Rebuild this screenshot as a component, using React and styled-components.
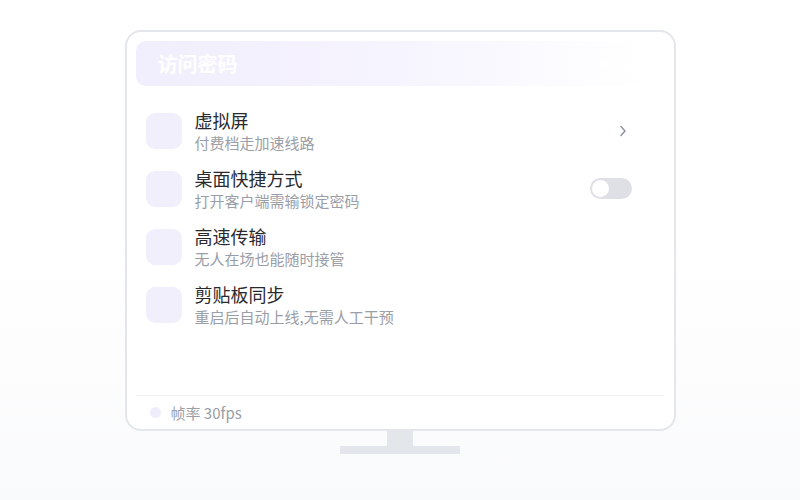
import React from "react";
import styled, { createGlobalStyle } from "styled-components";

const GlobalStyle = createGlobalStyle`
  html, body {
    margin: 0;
    padding: 0;
    background: #ffffff;
    font-family: "Noto Sans CJK SC", "Noto Sans", sans-serif;
  }
`;

const items = [
  { title: "虚拟屏", sub: "付费档走加速线路", action: "chevron" },
  { title: "桌面快捷方式", sub: "打开客户端需输锁定密码", action: "toggle" },
  { title: "高速传输", sub: "无人在场也能随时接管" },
  { title: "剪贴板同步", sub: "重启后自动上线,无需人工干预" },
];

export default function App() {
  return (
    <>
      <GlobalStyle />
      <Page>
        <Monitor>
          <Header>
            <HeaderTitle>访问密码</HeaderTitle>
            <HeaderStatus>
              <StatusDot />
              在线
            </HeaderStatus>
          </Header>
          <List>
            {items.map((item) => (
              <Row key={item.title}>
                <IconBox />
                <TextBlock>
                  <Title>{item.title}</Title>
                  <Sub>{item.sub}</Sub>
                </TextBlock>
                {item.action === "chevron" && (
                  <Chevron width="8" height="12" viewBox="0 0 8 12">
                    <path d="M2 1.5 L6 6 L2 10.5" />
                  </Chevron>
                )}
                {item.action === "toggle" && (
                  <Toggle>
                    <Knob />
                  </Toggle>
                )}
              </Row>
            ))}
          </List>
          <Footer>
            <FooterDot />
            帧率 30fps
          </Footer>
        </Monitor>
        <Neck />
        <Base />
      </Page>
    </>
  );
}

const Page = styled.div`
  width: 800px;
  height: 500px;
  padding-top: 30px;
  box-sizing: border-box;
  display: flex;
  flex-direction: column;
  align-items: center;
  background: linear-gradient(180deg, #ffffff 0%, #ffffff 48%, #f9fafb 100%);
`;

const Monitor = styled.div`
  width: 551px;
  height: 401px;
  box-sizing: border-box;
  border: 2px solid #e3e6ea;
  border-radius: 16px;
  padding: 9px 10px 0 9px;
  display: flex;
  flex-direction: column;
  background: #fff;
`;

const Header = styled.div`
  height: 45px;
  border-radius: 10px;
  background: linear-gradient(90deg, #f1eefd 0%, #f6f4fe 50%, #ffffff 97%);
  display: flex;
  align-items: center;
  justify-content: space-between;
  padding: 0 20px 0 22px;
`;

const HeaderTitle = styled.div`
  color: #ffffff;
  font-size: 20px;
  font-weight: 700;
`;

const HeaderStatus = styled.div`
  display: flex;
  align-items: center;
  gap: 8px;
  color: #ffffff;
  font-size: 14px;
`;

const StatusDot = styled.span`
  width: 8px;
  height: 8px;
  border-radius: 50%;
  background: #ffffff;
`;

const List = styled.div`
  flex: 1;
  display: flex;
  flex-direction: column;
  gap: 13px;
  padding: 22px 32px 0 10px;
`;

const Row = styled.div`
  display: flex;
  align-items: center;
  height: 45px;
`;

const IconBox = styled.div`
  width: 36px;
  height: 36px;
  border-radius: 9px;
  background: #f2effd;
  flex-shrink: 0;
  margin-right: 13px;
`;

const TextBlock = styled.div`
  flex: 1;
  display: flex;
  flex-direction: column;
`;

const Title = styled.div`
  font-size: 18px;
  line-height: 24px;
  color: #2a2a2e;
`;

const Sub = styled.div`
  font-size: 15px;
  line-height: 21px;
  color: #9a9ea6;
`;

const Chevron = styled.svg`
  fill: none;
  stroke: #8a8f98;
  stroke-width: 1.4;
  stroke-linecap: round;
  stroke-linejoin: round;
  margin-right: 5px;
`;

const Toggle = styled.div`
  position: relative;
  width: 42px;
  height: 21px;
  border-radius: 11px;
  background: #dfe0e5;
`;

const Knob = styled.span`
  position: absolute;
  left: 2px;
  top: 2px;
  width: 17px;
  height: 17px;
  border-radius: 50%;
  background: #ffffff;
`;

const Footer = styled.div`
  height: 33px;
  border-top: 1px solid #eef0f3;
  display: flex;
  align-items: center;
  gap: 10px;
  padding-left: 13px;
  font-size: 15px;
  color: #9a9ea6;
  margin: 0 1px;
`;

const FooterDot = styled.span`
  width: 11px;
  height: 11px;
  border-radius: 50%;
  background: #efecfc;
`;

const Neck = styled.div`
  width: 26px;
  height: 15px;
  background: #e3e6ea;
`;

const Base = styled.div`
  width: 120px;
  height: 8px;
  background: #e3e6ea;
`;
